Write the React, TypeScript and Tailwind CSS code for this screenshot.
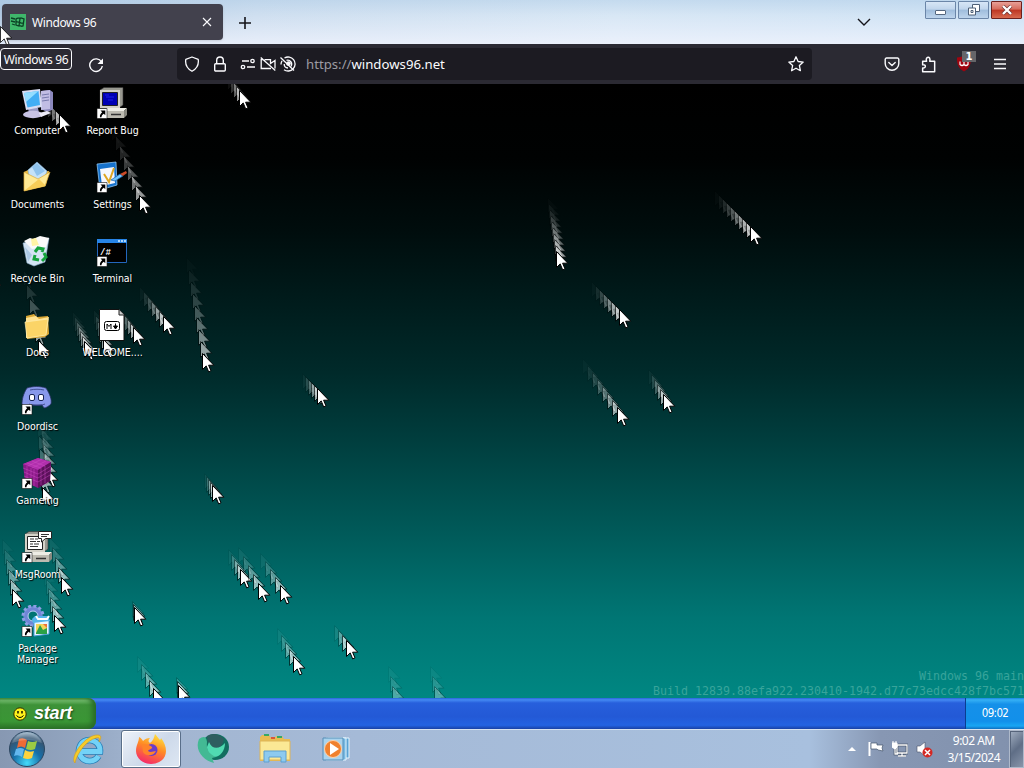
import type { ReactNode } from 'react'

type Trail = { x: number; y: number; dx: number; dy: number; n: number; ghost?: boolean }

const trails: Trail[] = [
    { x: 59, y: 30, dx: 4, dy: 4, n: 4 },
    { x: 239, y: 6, dx: 3, dy: 4, n: 4 },
    { x: 139, y: 111, dx: 4, dy: 10, n: 7 },
    { x: 750, y: 142, dx: 4, dy: 4, n: 9 },
    { x: 556, y: 167, dx: 1, dy: 6, n: 9 },
    { x: 619, y: 225, dx: 4, dy: 4, n: 7 },
    { x: 617, y: 323, dx: 5, dy: 7, n: 7 },
    { x: 663, y: 310, dx: 3, dy: 5, n: 5 },
    { x: 317, y: 304, dx: 3, dy: 3, n: 5 },
    { x: 202, y: 269, dx: 2, dy: 12, n: 8 },
    { x: 163, y: 232, dx: 4, dy: 5, n: 6 },
    { x: 133, y: 243, dx: 3, dy: 4, n: 5 },
    { x: 103, y: 255, dx: 2, dy: 6, n: 5 },
    { x: 84, y: 257, dx: 2, dy: 5, n: 6 },
    { x: 38, y: 256, dx: 3, dy: 14, n: 5 },
    { x: 212, y: 401, dx: 2, dy: 3, n: 4 },
    { x: 46, y: 384, dx: 1, dy: 8, n: 6 },
    { x: 42, y: 403, dx: 1, dy: 13, n: 5 },
    { x: 61, y: 493, dx: 3, dy: 10, n: 4 },
    { x: 12, y: 505, dx: 2, dy: 10, n: 5 },
    { x: 54, y: 531, dx: 2, dy: 9, n: 5 },
    { x: 134, y: 523, dx: 1, dy: 3, n: 2 },
    { x: 240, y: 485, dx: 3, dy: 5, n: 4 },
    { x: 258, y: 499, dx: 5, dy: 9, n: 4 },
    { x: 280, y: 501, dx: 5, dy: 8, n: 4 },
    { x: 293, y: 572, dx: 4, dy: 7, n: 4 },
    { x: 346, y: 556, dx: 4, dy: 5, n: 3 },
    { x: 153, y: 604, dx: 4, dy: 8, n: 4 },
    { x: 178, y: 601, dx: 1, dy: 4, n: 2 },
    { x: 394, y: 612, dx: 2, dy: 10, n: 3, ghost: true },
    { x: 436, y: 612, dx: 2, dy: 10, n: 3, ghost: true },
    { x: -11, y: 189, dx: 1, dy: 5, n: 2 },
]

const ARROW = 'M.5 .5v16l3.7-3.6 2.5 6 2.3-1-2.4-5.7h5.2z'

function CursorTrail({ t }: { t: Trail }) {
    const steps = Array.from({ length: t.n }, (_, i) => t.n - i)
    return (
        <g>
            {steps.map((i) => (
                <path
                    key={i}
                    d={ARROW}
                    fill="#fff"
                    stroke="#000"
                    strokeWidth="1"
                    opacity={(t.ghost ? 0.3 : 0.58) * Math.pow(1 - (i - 1) / t.n, 1.7)}
                    transform={`translate(${t.x - i * t.dx} ${t.y - i * t.dy})`}
                />
            ))}
            {!t.ghost && <path d={ARROW} fill="#fff" stroke="#000" strokeWidth="1" transform={`translate(${t.x} ${t.y})`} />}
        </g>
    )
}

function Shortcut() {
    return (
        <g>
            <path d="M1 21.500h10v10H1z" fill="#fff" stroke="#111" strokeWidth=".6" />
            <path d="M4.500 23.500h4.800v4.800l-1.500-1.500c-1.500 1-2.300 2-2.300 3.500H4c-.5-2 .7-3.700 2.200-5z" fill="#000" />
        </g>
    )
}

function ComputerIcon() {
    return (
        <>
            <path d="M20 4l9-1 4 3v16l-7 3-6-3z" fill="#8b88bd" />
            <path d="M20 4l9-1v19l-9 1z" fill="#c1bde4" />
            <path d="M21 8l7-1M21 11l7-1M21 14l7-1" stroke="#777aad" />
            <path d="M7 21h10l1 5H8z" fill="#9b9bc5" />
            <ellipse cx="12" cy="27.500" rx="10" ry="3.700" fill="#c8c3e5" />
            <path d="M1 4l18-2 2 18-16 3z" fill="#d8ddf3" />
            <path d="M3 6l14.500-2 1.500 14-12.500 2.500z" fill="#42aef4" />
            <path d="M3 6l14.500-2L5 15z" fill="#93ddff" />
            <path d="M18 26l8-2 4 2-10 4z" fill="#eceaf7" />
        </>
    )
}

function OldPcIcon({ chat }: { chat?: boolean }) {
    return (
        <>
            <path d="M4 3l4-2.500h19V18l-4 3H4z" fill="#989890" stroke="#333" strokeWidth=".6" />
            <path d="M4 3h20v18H4z" fill="#d4d2c8" />
            <path d="M6.500 5.500h15v13h-15z" fill={chat ? '#fff' : '#0000b4'} stroke="#222" />
            {chat ? (
                <path d="M9 8h4m1 0h3M9 10.500h6m1 0h3M9 13h3m1 0h5M9 15.500h8" stroke="#333" />
            ) : (
                <path d="M9 8h4m-3 2h8m-6 3h5" stroke="#1c1ce8" />
            )}
            <path d="M7 24l4-3h20l-3 3z" fill="#eeede5" />
            <path d="M28 24l3-3v7l-3 3z" fill="#88887f" />
            <path d="M6 24h22v7H6z" fill="#bdbbb1" />
            <path d="M15 27.500h10" stroke="#333" strokeWidth="1.500" />
            {chat && (
                <>
                    <path d="M17.500.5h13v7h-6l-4 3.500V7.500h-3z" fill="#fff" stroke="#222" />
                    <path d="M20 3.500h8M20 5.500h6" stroke="#333" />
                </>
            )}
            <Shortcut />
        </>
    )
}

function DocumentsIcon() {
    return (
        <>
            <path d="M3 11l6-3 4 3 15-1-3 14L5 29z" fill="#e9b841" />
            <path d="M7 9l9-8 10 9-5 14-12-2z" fill="#c5e2f8" stroke="#7aacd7" strokeWidth=".6" />
            <path d="M11 6l5-4 8 8-8 5z" fill="#8fc3ed" />
            <path d="M3 11l14 7 12-7-5 14L3 30z" fill="#ffe994" stroke="#dba938" strokeWidth=".7" />
            <path d="M3 30l15-12 7 7z" fill="#f7cd58" />
        </>
    )
}

function SettingsIcon() {
    return (
        <>
            <path d="M1 3l19-2 1 23-17 5z" fill="#1672cc" stroke="#9cd3ff" strokeWidth=".7" />
            <path d="M4 8l14-2 1 16L6 25z" fill="#f4f7ff" />
            <path d="M8 13l5 8 5-14" fill="none" stroke="#dda623" strokeWidth="2" />
            <path d="M15 19l9-6 3 2-8 5z" fill="#72c4fa" stroke="#1260ad" strokeWidth=".7" />
            <path d="M24 13l6-3 1 2-4 3z" fill="#cc4b28" />
            <Shortcut />
        </>
    )
}

function RecycleIcon() {
    return (
        <>
            <path d="M2 8l26-5-4 24-11 4-7-3z" fill="#d4e4f3" stroke="#8db0cb" strokeWidth=".6" />
            <path d="M3 6l6-3 3 1 7-3 9 2-3 9-14 2z" fill="#fafafa" />
            <path d="M10 4l5-1 3 7-7 1z" fill="#fff5a6" />
            <path d="M4 12l7 8-4 7z" fill="#abc8e4" />
            <path d="M14 17l3-4 5 1-1 3M23 18l2 4-4 4M18 25l-5-1 1-4" fill="none" stroke="#15a33d" strokeWidth="3" />
        </>
    )
}

function TerminalIcon() {
    return (
        <>
            <path d="M1.500 4.500h29v23h-29z" fill="#000" stroke="#2366bd" />
            <path d="M1 4h30v4H1z" fill="#2784e6" />
            <path d="M22 6h2m1 0h2m1 0h2" stroke="#d7eeff" strokeWidth="1.500" />
            <text x="4" y="20" fill="#fff" fontFamily="Liberation Mono" fontWeight="700" fontSize="9">/#</text>
            <Shortcut />
        </>
    )
}

function FolderIcon() {
    return (
        <>
            <path d="M5 7l8-2 3 3 11-1 1 18-4 3-18 2z" fill="#d9a735" />
            <path d="M5 9l10-2 3 3 10-2-3 18L5 29z" fill="#ffe391" />
            <path d="M4 13l23-3-2 16-19 3z" fill="#fbd467" stroke="#ffeeb0" strokeWidth=".7" />
        </>
    )
}

function MarkdownIcon() {
    return (
        <>
            <path d="M3.500.5H23l5 5V31.500H3.500z" fill="#fff" stroke="#111" />
            <path d="M23 1v5h5" fill="#ccc" stroke="#222" />
            <rect x="8.500" y="12.500" width="15" height="9" rx="2" fill="#fff" stroke="#000" />
            <path d="M11 20v-5l2 2.500 2-2.500v5" fill="none" stroke="#000" />
            <path d="M19.500 14.500v3M17.500 17h4l-2 3z" fill="#000" stroke="#000" />
        </>
    )
}

function DoordiscIcon() {
    return (
        <>
            <path d="M6 5c6-2 13-2 19 0 4 6 6 12 5 16-2 2-5 4-7 4l-2-3H10l-2 2c-3 0-6-1-7-3C1 17 2 11 6 5z" fill="#8798eb" stroke="#26305f" strokeWidth=".8" />
            <path d="M9 7c4-1 10-1 14 0M8 21c5 2 11 2 16 0" fill="none" stroke="#313e7e" strokeWidth=".8" />
            <rect x="8.500" y="11.500" width="5" height="6" rx="1.500" fill="#fff" stroke="#172456" />
            <rect x="17.500" y="11.500" width="5" height="6" rx="1.500" fill="#fff" stroke="#172456" />
            <Shortcut />
        </>
    )
}

function CubeIcon() {
    return (
        <>
            <path d="M2 7l15-6 13 4-1 19-12 7L4 25z" fill="#8b1a89" />
            <path d="M2 7l15-6 13 4-13 8z" fill="#b02fac" />
            <path d="M17 13l13-8-1 19-12 7z" fill="#5c105b" />
            <path d="M2 11l15 6 13-8M3 15l14 6 13-8M3 19l14 6 12-7M6 6l14 5v17M11 4l13 5v17M7 9l14-7M11 11l14-7M6 9v17M10 11v17M13 12v17" stroke="#d050c8" strokeWidth=".8" fill="none" opacity=".55" />
            <Shortcut />
        </>
    )
}

function PackageIcon() {
    return (
        <>
            <circle cx="12" cy="11" r="7.500" fill="none" stroke="#6f86d6" strokeWidth="4.500" />
            <circle cx="12" cy="11" r="10" fill="none" stroke="#8c9fe4" strokeWidth="3" strokeDasharray="3 2.236" />
            <circle cx="12" cy="11" r="5" fill="none" stroke="#c7d4ff" strokeWidth="1" />
            <path d="M13 15h15v14l-15 2z" fill="#e9f6ff" stroke="#4c9dd6" />
            <path d="M11 14l3-3h13l2 5-17 2z" fill="#55b5ec" />
            <path d="M15 11l2 3h9l2-3" fill="none" stroke="#fff" strokeWidth="2" />
            <path d="M15 19h11v10H15z" fill="#f3d55b" />
            <path d="M15 28l4-8 3 5 4-2v6H15z" fill="#2ba146" />
            <path d="M22 19h4v4z" fill="#ed703a" />
            <Shortcut />
        </>
    )
}

const desktopIcons: { label: string; icon: ReactNode }[] = [
    { label: 'Computer', icon: <ComputerIcon /> },
    { label: 'Documents', icon: <DocumentsIcon /> },
    { label: 'Recycle Bin', icon: <RecycleIcon /> },
    { label: 'Docs', icon: <FolderIcon /> },
    { label: 'Doordisc', icon: <DoordiscIcon /> },
    { label: 'Gameing', icon: <CubeIcon /> },
    { label: 'MsgRoom', icon: <OldPcIcon chat /> },
    { label: 'Package Manager', icon: <PackageIcon /> },
    { label: 'Report Bug', icon: <OldPcIcon /> },
    { label: 'Settings', icon: <SettingsIcon /> },
    { label: 'Terminal', icon: <TerminalIcon /> },
    { label: 'WELCOME....', icon: <MarkdownIcon /> },
]

function TitleBar() {
    return (
        <div className="flex h-11 items-start bg-[linear-gradient(90deg,#b4cce5_0%,#cfdff0_25%,#d8e7f5_60%,#d0e3f5_100%)]">
            <div className="flex h-full w-full items-start bg-[linear-gradient(180deg,rgba(160,195,225,0.35)_0%,rgba(255,255,255,0)_35%,rgba(245,246,255,0.65)_100%)]">
                <div className="mt-1 ml-0.5 flex h-9 w-[221px] items-center rounded bg-[#42414d] pr-[11px] pl-2 shadow">
                    <svg className="h-4 w-4" viewBox="0 0 16 16">
                        <path d="M0 0h16v16H0z" fill="#3fb76b" />
                        <path d="M6 5c2-2 3 0 5-1l3 1-1 7c-2 1-3-1-4 0l-3-1zM10 4.500L9 12M6 8c3-1 5 2 7 1M1 4l4 1M1 7l4 1M2 10l3 1" fill="none" stroke="#0b4024" strokeWidth="1.300" />
                    </svg>
                    <span className="ml-1.5 mt-px text-xs tracking-[-0.4px] text-[#fbfbfe]">Windows 96</span>
                    <svg className="ml-auto h-2.5 w-2.5" viewBox="0 0 10 10" stroke="#fbfbfe" strokeWidth="1.100">
                        <path d="M1 1l8 8M9 1L1 9" />
                    </svg>
                </div>
                <svg className="mt-[17px] ml-[16px] h-3 w-3" viewBox="0 0 12 12" stroke="#15141a" strokeWidth="1.600">
                    <path d="M6 0v12M0 6h12" />
                </svg>
                <svg className="mt-[17px] mr-[54px] ml-auto h-2.5 w-[14px]" viewBox="0 0 14 10" fill="none" stroke="#15141a" strokeWidth="1.400">
                    <path d="M1 2l6 6 6-6" />
                </svg>
                <div className="mt-px mr-[2px] flex gap-[2px]">
                    <div className="flex h-[18px] w-[31px] items-center justify-center rounded-[1px] border border-[#6b86a8] bg-[linear-gradient(180deg,#d7e6f6_0%,#c0d5ec_45%,#9fbddc_50%,#bdd4ec_100%)]">
                        <div className="mt-1 h-[5px] w-[11px] rounded-[1px] border border-[#55677e] bg-white" />
                    </div>
                    <div className="flex h-[18px] w-[31px] items-center justify-center rounded-[1px] border border-[#6b86a8] bg-[linear-gradient(180deg,#d7e6f6_0%,#c0d5ec_45%,#9fbddc_50%,#bdd4ec_100%)]">
                        <svg className="h-3 w-3" viewBox="0 0 12 12" fill="#fff" stroke="#4e6077">
                            <path d="M4.500.5h7v7h-7z" />
                            <path d="M.5 4h7v7h-7zM3 6.500h2v2H3z" />
                        </svg>
                    </div>
                    <div className="flex h-[18px] w-[31px] items-center justify-center rounded-[1px] border border-[#6d211d] bg-[linear-gradient(180deg,#e8a097_0%,#d66c5c_45%,#bd3522_50%,#d7694e_100%)]">
                        <svg className="h-2.5 w-3" viewBox="0 0 12 10">
                            <path d="M2 1l8 8M10 1L2 9" stroke="#6b3030" strokeWidth="3.600" />
                            <path d="M2 1l8 8M10 1L2 9" stroke="#fff" strokeWidth="2.400" />
                        </svg>
                    </div>
                </div>
            </div>
        </div>
    )
}

function ToolBar() {
    return (
        <div className="flex h-10 items-center bg-[#2b2a33]">
            <svg className="mt-px ml-[88px] h-4 w-4" viewBox="0 0 16 16" fill="none" stroke="#fbfbfe" strokeWidth="1.400">
                <path d="M13.500 5A6.300 6.300 0 1 0 14.300 9" />
                <path d="M15 1.500V7H9.500z" fill="#fbfbfe" stroke="none" />
            </svg>
            <div className="ml-[73px] flex h-8 w-[635px] items-center rounded bg-[#1c1b22] pr-2 pl-[7px]">
                <svg className="h-4 w-4" viewBox="0 0 16 16" fill="none" stroke="#fbfbfe" strokeWidth="1.300" strokeLinejoin="round">
                    <path d="M8 1l6.200 2.300c.8 5-1.700 9.500-6.200 12-4.500-2.500-7-7-6.200-12z" />
                </svg>
                <svg className="ml-3 h-4 w-4" viewBox="0 0 16 16" fill="none" stroke="#fbfbfe" strokeWidth="1.400">
                    <rect x="2.700" y="7.700" width="10.600" height="7.300" rx="1" />
                    <path d="M4.700 7.500V4.300a3.300 3.300 0 0 1 6.600 0v3.200" />
                </svg>
                <svg className="ml-3 h-4 w-4" viewBox="0 0 16 16" fill="none" stroke="#fbfbfe" strokeWidth="1.300">
                    <path d="M2 5h7M7 11h8" />
                    <circle cx="12.500" cy="5" r="1.700" />
                    <circle cx="3" cy="11" r="1.700" />
                </svg>
                <svg className="ml-1 h-4 w-4" viewBox="0 0 16 16" fill="none" stroke="#fbfbfe" strokeWidth="1.300">
                    <path d="M.7 1.500l14.600 13M4.500 3.700h6v3.800l4.500-3v8M3 3.700H1.200v8.800H11" />
                </svg>
                <svg className="ml-1 h-4 w-4" viewBox="0 0 16 16" fill="none" stroke="#fbfbfe" strokeWidth="1.300">
                    <path d="M4.500 2a7 7 0 1 1-.5 11.700M1 8.500A7 7 0 0 1 2 4.800M6.500 4.300a4 4 0 0 1 4.500 6M8 12a4 4 0 0 1-3.800-4M.5 1.500l13.500 13" />
                    <circle cx="8.500" cy="7.500" r="1.700" fill="#fbfbfe" />
                </svg>
                <span className="mt-[2px] ml-[10px] text-[13.200px] text-[#9c9ba3]">https://<span className="text-[#fbfbfe]">windows96.net</span></span>
                <svg className="ml-auto h-4 w-4" viewBox="0 0 16 16" fill="none" stroke="#fbfbfe" strokeWidth="1.300" strokeLinejoin="round">
                    <path d="M8 .8l2.100 4.700 5.100.6-3.800 3.500 1 5.100L8 12.200l-4.400 2.500 1-5.100L.8 6.100l5.100-.6z" />
                </svg>
            </div>
            <svg className="ml-[72px] h-4 w-4" viewBox="0 0 16 16" fill="none" stroke="#fbfbfe" strokeWidth="1.400" strokeLinecap="round" strokeLinejoin="round">
                <path d="M2.500 2h11a1.300 1.300 0 0 1 1.300 1.300V7.500a6.800 6.800 0 0 1-13.600 0V3.300A1.300 1.300 0 0 1 2.500 2z" />
                <path d="M4.800 6.500L8 9.500l3.200-3" />
            </svg>
            <svg className="ml-5 h-[17px] w-[17px]" viewBox="0 0 16 16" fill="none" stroke="#fbfbfe" strokeWidth="1.400" strokeLinejoin="round">
                <path d="M2.500 14.800v-3.500c3 .7 3.700-3.600 0-3V5h3.700C4.500.2 10.500-.5 9.200 5h4.600v9.800z" />
            </svg>
            <div className="relative ml-[19px] h-5 w-5">
                <svg className="h-5 w-4" viewBox="0 0 16 20">
                    <path d="M8 1.500c2 1.200 4.500 2 7 2 .3 6.500-1.500 11-7 14C2.500 14.500.7 10 1 3.500c2.500 0 5-.8 7-2z" fill="#a00510" />
                    <path d="M4 7.500v3q2 2 4 0v-3m0 3q2 2 4 0v-3" fill="none" stroke="#fff" strokeWidth="1.200" />
                </svg>
                <span className="absolute -top-[3px] left-[6px] flex h-[11px] w-[14px] items-center justify-center bg-[#656569] font-['DejaVu_Sans',sans-serif] text-[10px] font-bold text-white">1</span>
            </div>
            <svg className="ml-[18px] h-3 w-3" viewBox="0 0 12 12" stroke="#fbfbfe" strokeWidth="1.300">
                <path d="M0 1.500h12M0 6h12M0 10.500h12" />
            </svg>
        </div>
    )
}

function Desktop() {
    return (
        <div className="relative h-[614px] overflow-hidden bg-[linear-gradient(180deg,#000_0%,#000202_12%,#000d0d_24%,#002a2a_47%,#003a3a_56%,#005c5b_74%,#007674_87%,#008782_100%)]">
            <svg className="absolute inset-0 h-full w-full" viewBox="0 0 1024 614">
                {trails.map((t, i) => (
                    <CursorTrail key={i} t={t} />
                ))}
            </svg>
            <div className="relative grid w-[150px] auto-cols-[75px] grid-flow-col grid-rows-[repeat(8,74px)]">
                {desktopIcons.map((d) => (
                    <div key={d.label} className="flex flex-col items-center pt-[3px]">
                        <svg className="mr-px h-8 w-8 shrink-0" viewBox="0 0 32 32">{d.icon}</svg>
                        <span className="mt-[6px] w-[70px] text-center font-['DejaVu_Sans_Condensed','DejaVu_Sans',sans-serif] text-[10.500px] leading-[11px] tracking-[-0.05px] text-white [text-shadow:1px_1px_1px_#000]">
                            {d.label}
                        </span>
                    </div>
                ))}
            </div>
            <div className="absolute right-0 -bottom-px text-right font-['DejaVu_Sans_Mono',monospace] text-[11.640px] leading-[15px] text-[#38a49b]">
                <div>Windows 96 main</div>
                <div>Build 12839.88efa922.230410-1942.d77c73edcc428f7bc571</div>
            </div>
        </div>
    )
}

function XpBar() {
    return (
        <div className="flex h-[31px] bg-[linear-gradient(180deg,#2a65d9_0%,#4489f3_6%,#275fdc_16%,#2359d6_60%,#2463e2_88%,#1941a5_100%)]">
            <div className="flex h-full w-[96px] items-center rounded-r-lg bg-[linear-gradient(180deg,#4d9a48_0%,#73bd6d_8%,#3d9238_22%,#3a9635_75%,#2c7428_100%)] pl-[13px] shadow-[inset_-4px_0_5px_#2a6d27]">
                <svg className="h-[14px] w-[14px]" viewBox="0 0 14 14">
                    <circle cx="7" cy="7" r="6.200" fill="#fff31b" stroke="#2b2b00" />
                    <path d="M5 4v2.500M9 4v2.500" stroke="#000" strokeWidth="1.400" />
                    <path d="M3.500 8.500q3.500 4 7 0" fill="none" stroke="#000" />
                </svg>
                <span className="ml-[7px] font-['Liberation_Sans',sans-serif] text-[18px] font-bold tracking-[-0.2px] text-white italic [text-shadow:1px_1px_2px_#1d4a1a]">start</span>
            </div>
            <div className="ml-auto flex w-[59px] items-center justify-center border-l border-[#0a3d91] bg-[linear-gradient(180deg,#1b86dd_0%,#35b0f5_6%,#1590e9_20%,#1290ea_75%,#18a6f4_90%,#0f6fc0_100%)] font-['DejaVu_Sans_Condensed',sans-serif] text-[11.500px] tracking-[-0.7px] text-white">
                09:02
            </div>
        </div>
    )
}

function AeroBar() {
    return (
        <div className="flex h-[39px] items-center border-t border-[#d7e2f0] bg-[linear-gradient(90deg,#8798b2_0%,#93a6c1_8%,#a2b5d0_14%,#a5bad7_35%,#a8c0de_79%,#8797b3_86%,#8191ad_100%)]">
            <svg className="ml-2 h-[38px] w-[38px]" viewBox="0 0 38 38">
                <defs>
                    <radialGradient id="orb" cx=".5" cy=".9" r=".9">
                        <stop offset="0" stopColor="#43dbfa" />
                        <stop offset=".45" stopColor="#176fa9" />
                        <stop offset=".8" stopColor="#345572" />
                        <stop offset="1" stopColor="#a7c0d5" />
                    </radialGradient>
                </defs>
                <circle cx="19" cy="19" r="17.500" fill="url(#orb)" stroke="#2c4660" />
                <path d="M11 9q4-2 8 1l-2 8q-4-3-8 0z" fill="#ee6b35" />
                <path d="M20 11q4 2 9 0l-2 8q-4 2-9 0z" fill="#9bcb44" />
                <path d="M8 19q4-2 8 0l-2 8q-4-3-8-1z" fill="#63b7ee" />
                <path d="M17 20q4 3 9 1l-2 7q-4 2-9 0z" fill="#fed33f" />
                <path d="M4 13a16 16 0 0 1 30 0q-15-6-30 0z" fill="#fff" opacity=".2" />
            </svg>
            <div className="flex w-[75px] justify-center pl-2">
                <svg className="h-8 w-8" viewBox="0 0 32 32" fill="none">
                    <path d="M26.500 23A10.500 10.500 0 1 1 28 18.500H9" stroke="#287fb8" strokeWidth="6.500" />
                    <path d="M26.500 23A10.500 10.500 0 1 1 28 18.500H9" stroke="#73d2f7" strokeWidth="5" />
                    <path d="M3 30C-3 24 14 1 26 2c4 0 3 4 1 7 1-4 0-5-3-4C15 7 5 20 3 30z" fill="#f7cb27" stroke="#d59b18" strokeWidth=".6" />
                </svg>
            </div>
            <div className="flex h-full w-[60px] items-center justify-center rounded-[3px] border border-[#596e89] bg-[linear-gradient(135deg,#eef2f9,#cdd9ea_55%,#dee7f3)] shadow-[inset_0_0_0_1px_#fff]">
                <svg className="h-8 w-8" viewBox="0 0 32 32">
                    <defs>
                        <linearGradient id="fox" x1=".7" y1="0" x2=".3" y2="1">
                            <stop offset="0" stopColor="#ffe33e" />
                            <stop offset=".45" stopColor="#ff8a25" />
                            <stop offset="1" stopColor="#f5256d" />
                        </linearGradient>
                    </defs>
                    <path d="M20 1c2 2 3 4 5 6 1-1 1-2 1-2 3 4 5 8 5 13 0 8-7 13-15 13S1 25 1 18C1 12 4 9 4 4c2 1 3 2 4 4 2-2 4-3 7-3-2 2-2 4 0 5 3-2 4-5 5-9z" fill="url(#fox)" />
                    <circle cx="16.500" cy="17" r="6" fill="#6b3cca" />
                    <path d="M7 12c4-2 8 0 10 2 1 2-3 2-4 4 3 2 5 0 8 0-2 5-10 6-13 1z" fill="#ff832a" />
                </svg>
            </div>
            <svg className="ml-4 h-8 w-8" viewBox="0 0 32 32">
                <ellipse cx="18" cy="14" rx="14" ry="13" fill="#126e60" />
                <path d="M10 3q8-5 17 3-2 10-10 10-6 0-7-13z" fill="#2e5e60" />
                <path d="M12 9c3 8 11 7 16 1 0 8-5 14-11 14-4 0-7-5-7-10z" fill="#50dab1" />
                <path d="M2 6q7-5 8 3c-1 8 2 12 9 15l-4 1 2 5C7 28-3 18 2 6z" fill="#43b994" />
            </svg>
            <svg className="ml-[30px] h-8 w-8" viewBox="0 0 32 32">
                <path d="M1 4l2-2h7l2 3h4l1-2h6l2 3h6v22H1z" fill="#e8bc53" />
                <path d="M5 2h5M18 4h5" stroke="#36a866" strokeWidth="2" />
                <path d="M12 5h4" stroke="#da573c" strokeWidth="2" />
                <path d="M1 8h30v19H1z" fill="#fbe895" stroke="#ddb459" />
                <path d="M5 29V18h22v11h-5v-5H10v5z" fill="#8dcaef" stroke="#5c9fd0" />
            </svg>
            <svg className="ml-[29px] h-8 w-8" viewBox="0 0 32 32">
                <path d="M8 5h21v20H8z" fill="#5aa2d3" stroke="#e5f6ff" />
                <path d="M6 5h20v22H6z" fill="#78b9e2" stroke="#e5f6ff" />
                <path d="M3 5h20v22H3z" fill="#a9d3ed" stroke="#548db7" />
                <circle cx="13" cy="16" r="8.500" fill="#f0812e" stroke="#ffd2a9" />
                <path d="M10 10l9 6-9 6z" fill="#fff" />
            </svg>
            <svg className="ml-auto h-2 w-2" viewBox="0 0 8 8">
                <path d="M0 6l4-4 4 4z" fill="#fff" />
            </svg>
            <svg className="ml-3 h-4 w-4" viewBox="0 0 16 16">
                <path d="M1.500 1v14" stroke="#fff" strokeWidth="2" />
                <path d="M3 2h6v2h6l-1 3 1 3-5-1-1-1H3z" fill="#fff" stroke="#43546c" strokeWidth=".7" />
            </svg>
            <svg className="ml-2 h-4 w-4" viewBox="0 0 16 16" fill="none">
                <path d="M5 4h10v8H5zM10 12v3M6 15h8M3 8v5h3" stroke="#303e52" strokeWidth="2.500" />
                <path d="M5 4h10v8H5zM10 12v2.500M6 15h8M3 7v6h3" stroke="#fff" strokeWidth="1.300" />
                <path d="M0 2h5v4L3 8 0 6zM1 0v2M4 0v2" fill="#fff" stroke="#fff" />
            </svg>
            <svg className="ml-2 h-[17px] w-[17px]" viewBox="0 0 17 17">
                <path d="M1 5h3l5-4v14l-5-4H1z" fill="#fff" stroke="#465369" strokeWidth=".6" />
                <circle cx="11.500" cy="11.500" r="5" fill="#d42823" />
                <path d="M9 9l5 5M14 9l-5 5" stroke="#fff" strokeWidth="1.500" />
            </svg>
            <div className="mr-[9px] ml-[15px] text-center text-xs leading-[17px] tracking-[-0.5px] text-white">
                <div>9:02 AM</div>
                <div>3/15/2024</div>
            </div>
            <div className="h-full w-[15px] border border-[#aeb9ca] bg-[linear-gradient(135deg,#a3b0c2,#5f6e86_50%,#8895aa)] shadow-[inset_1px_1px_0_#56647a]" />
        </div>
    )
}

export default function App() {
    return (
        <div className="relative h-[768px] w-[1024px] overflow-hidden font-['Noto_Sans','Open_Sans',sans-serif]">
            <TitleBar />
            <ToolBar />
            <Desktop />
            <XpBar />
            <AeroBar />
            <div className="absolute top-12 left-0 flex h-[22px] w-[72px] items-center justify-center rounded border border-[#fbfbfe] bg-[#2b2a33] pt-px text-xs tracking-[-0.35px] whitespace-nowrap text-[#fbfbfe]">
                Windows 96
            </div>
            <svg className="absolute top-[26px] left-0 h-[20px] w-3" viewBox="0 0 12 20">
                <path d={ARROW} fill="#fff" stroke="#000" strokeWidth=".8" />
            </svg>
        </div>
    )
}
